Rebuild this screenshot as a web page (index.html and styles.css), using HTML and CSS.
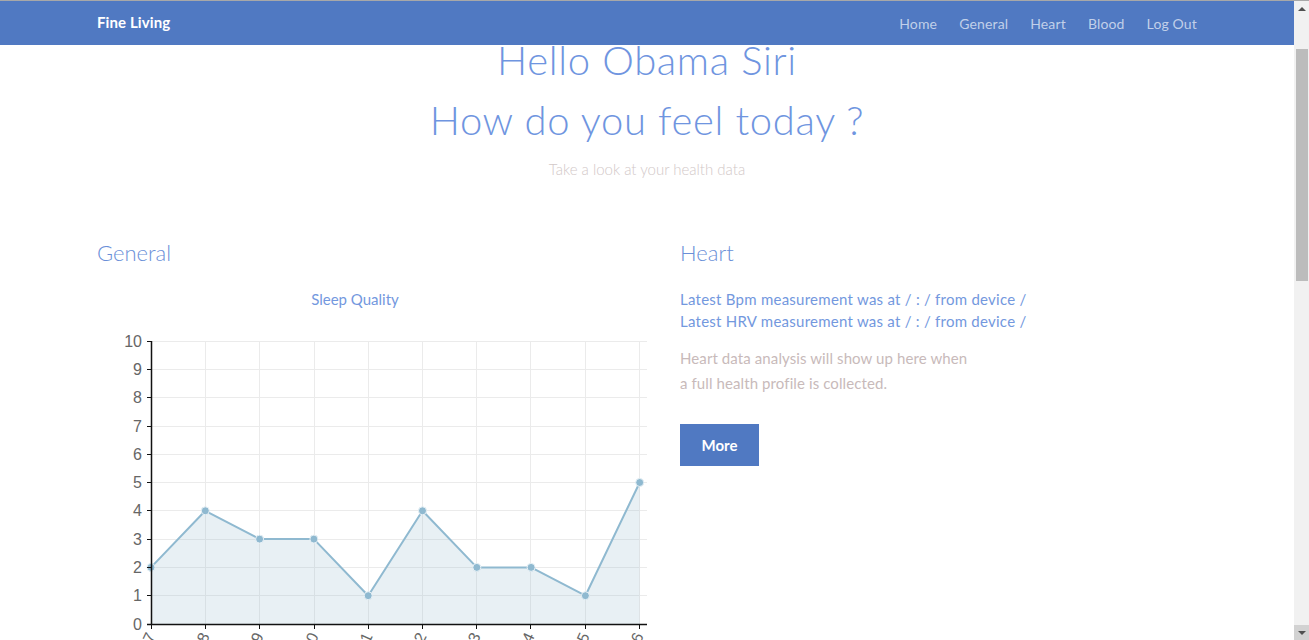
FILE: index.html
```html
<!DOCTYPE html>
<html lang="en">
<head>
<meta charset="utf-8">
<title>Fine Living</title>
<link rel="stylesheet" href="styles.css">
</head>
<body>
<nav class="navbar">
  <div class="container nav-inner">
    <a class="brand" href="#">Fine Living</a>
    <ul class="nav-links">
      <li><a href="#">Home</a></li>
      <li><a href="#">General</a></li>
      <li><a href="#">Heart</a></li>
      <li><a href="#">Blood</a></li>
      <li><a href="#">Log Out</a></li>
    </ul>
  </div>
</nav>

<div class="scrollbar" aria-hidden="true">
  <div class="sb-btn sb-up"><span class="tri-up"></span></div>
  <div class="sb-track"><div class="sb-thumb"></div></div>
  <div class="sb-btn sb-down"><span class="tri-down"></span></div>
</div>

<main class="page">
  <header class="hero">
    <h1 class="hero-title">Hello Obama Siri</h1>
    <h1 class="hero-title second">How do you feel today ?</h1>
    <p class="hero-sub">Take a look at your health data</p>
  </header>

  <section class="container sections">
    <div class="col col-general">
      <h2 class="section-title">General</h2>
      <div class="chart-title">Sleep Quality</div>
      <svg class="chart" width="560" height="330" viewBox="0 0 560 330" xmlns="http://www.w3.org/2000/svg">
        <g class="grid" stroke="#ebebeb" stroke-width="1">
          <line x1="54" y1="11.5" x2="550" y2="11.5"/>
          <line x1="54" y1="39.5" x2="550" y2="39.5"/>
          <line x1="54" y1="67.5" x2="550" y2="67.5"/>
          <line x1="54" y1="96.5" x2="550" y2="96.5"/>
          <line x1="54" y1="124.5" x2="550" y2="124.5"/>
          <line x1="54" y1="152.5" x2="550" y2="152.5"/>
          <line x1="54" y1="180.5" x2="550" y2="180.5"/>
          <line x1="54" y1="209.5" x2="550" y2="209.5"/>
          <line x1="54" y1="237.5" x2="550" y2="237.5"/>
          <line x1="54" y1="265.5" x2="550" y2="265.5"/>
          <line x1="108.5" y1="11" x2="108.5" y2="294"/>
          <line x1="162.5" y1="11" x2="162.5" y2="294"/>
          <line x1="217.5" y1="11" x2="217.5" y2="294"/>
          <line x1="271.5" y1="11" x2="271.5" y2="294"/>
          <line x1="325.5" y1="11" x2="325.5" y2="294"/>
          <line x1="379.5" y1="11" x2="379.5" y2="294"/>
          <line x1="433.5" y1="11" x2="433.5" y2="294"/>
          <line x1="488.5" y1="11" x2="488.5" y2="294"/>
          <line x1="542.5" y1="11" x2="542.5" y2="294"/>
        </g>
        <polygon fill="rgba(151,187,205,0.22)" points="54,237.4 108.3,180.8 162.6,209.1 216.9,209.1 271.2,265.7 325.5,180.8 379.8,237.4 434.1,237.4 488.4,265.7 542.7,152.5 542.7,294 54,294"/>
        <polyline fill="none" stroke="#8fb9d0" stroke-width="2" stroke-linejoin="round" points="54,237.4 108.3,180.8 162.6,209.1 216.9,209.1 271.2,265.7 325.5,180.8 379.8,237.4 434.1,237.4 488.4,265.7 542.7,152.5"/>
        <g fill="#8fb9d0" stroke="#e8f1f6" stroke-width="1">
          <circle cx="54" cy="237.4" r="4"/>
          <circle cx="108.3" cy="180.8" r="4"/>
          <circle cx="162.6" cy="209.1" r="4"/>
          <circle cx="216.9" cy="209.1" r="4"/>
          <circle cx="271.2" cy="265.7" r="4"/>
          <circle cx="325.5" cy="180.8" r="4"/>
          <circle cx="379.8" cy="237.4" r="4"/>
          <circle cx="434.1" cy="237.4" r="4"/>
          <circle cx="488.4" cy="265.7" r="4"/>
          <circle cx="542.7" cy="152.5" r="4"/>
        </g>
        <g class="axes" stroke="#111" stroke-width="1.5">
          <line x1="54.5" y1="11" x2="54.5" y2="294.5"/>
          <line x1="50" y1="294.5" x2="550" y2="294.5"/>
        </g>
        <g class="ticks" stroke="#111" stroke-width="1">
          <line x1="50" y1="11.5" x2="54" y2="11.5"/>
          <line x1="50" y1="39.5" x2="54" y2="39.5"/>
          <line x1="50" y1="67.5" x2="54" y2="67.5"/>
          <line x1="50" y1="96.5" x2="54" y2="96.5"/>
          <line x1="50" y1="124.5" x2="54" y2="124.5"/>
          <line x1="50" y1="152.5" x2="54" y2="152.5"/>
          <line x1="50" y1="180.5" x2="54" y2="180.5"/>
          <line x1="50" y1="209.5" x2="54" y2="209.5"/>
          <line x1="50" y1="237.5" x2="54" y2="237.5"/>
          <line x1="50" y1="265.5" x2="54" y2="265.5"/>
          <line x1="54.5" y1="294" x2="54.5" y2="299"/>
          <line x1="108.5" y1="294" x2="108.5" y2="299"/>
          <line x1="162.5" y1="294" x2="162.5" y2="299"/>
          <line x1="217.5" y1="294" x2="217.5" y2="299"/>
          <line x1="271.5" y1="294" x2="271.5" y2="299"/>
          <line x1="325.5" y1="294" x2="325.5" y2="299"/>
          <line x1="379.5" y1="294" x2="379.5" y2="299"/>
          <line x1="433.5" y1="294" x2="433.5" y2="299"/>
          <line x1="488.5" y1="294" x2="488.5" y2="299"/>
          <line x1="542.5" y1="294" x2="542.5" y2="299"/>
        </g>
        <g class="ylabels" font-family="'Liberation Sans', Arial, sans-serif" font-size="16" fill="#666" text-anchor="end">
          <text x="45" y="17">10</text>
          <text x="45" y="45">9</text>
          <text x="45" y="73">8</text>
          <text x="45" y="102">7</text>
          <text x="45" y="130">6</text>
          <text x="45" y="158">5</text>
          <text x="45" y="186">4</text>
          <text x="45" y="215">3</text>
          <text x="45" y="243">2</text>
          <text x="45" y="271">1</text>
          <text x="45" y="300">0</text>
        </g>
        <g class="xlabels" font-family="'Liberation Sans', Arial, sans-serif" font-size="16" fill="#666" text-anchor="end">
          <text transform="translate(59,306) rotate(-65)">2017-04-17</text>
          <text transform="translate(113,306) rotate(-65)">2017-04-18</text>
          <text transform="translate(167,306) rotate(-65)">2017-04-19</text>
          <text transform="translate(222,306) rotate(-65)">2017-04-20</text>
          <text transform="translate(276,306) rotate(-65)">2017-04-21</text>
          <text transform="translate(330,306) rotate(-65)">2017-04-22</text>
          <text transform="translate(384,306) rotate(-65)">2017-04-23</text>
          <text transform="translate(438,306) rotate(-65)">2017-04-24</text>
          <text transform="translate(493,306) rotate(-65)">2017-04-25</text>
          <text transform="translate(547,306) rotate(-65)">2017-04-26</text>
        </g>
      </svg>
    </div>

    <div class="col col-heart">
      <h2 class="section-title">Heart</h2>
      <p class="measure">Latest Bpm measurement was at / : / from device /<br>Latest HRV measurement was at / : / from device /</p>
      <p class="analysis">Heart data analysis will show up here when<br>a full health profile is collected.</p>
      <a class="btn" href="#">More</a>
    </div>
  </section>

  <section class="container sections lower">
    <div class="col">
      <h2 class="section-title">Blood</h2>
      <p class="analysis">Blood data analysis will show up here when<br>a full health profile is collected.</p>
    </div>
  </section>
</main>
</body>
</html>
```

FILE: styles.css
```css
* { box-sizing: border-box; }

html, body {
  margin: 0;
  padding: 0;
}

body {
  font-family: Lato, "Open Sans", sans-serif;
  background: #fff;
  color: #c2b5b5;
  margin-right: 15px;
}

a { text-decoration: none; }

.container {
  width: 1100px;
  margin: 0 auto;
}

.navbar {
  position: fixed;
  top: 0;
  left: 0;
  right: 15px;
  height: 45px;
  background: #5079c2;
  border-top: 1px solid #a8a8a8;
  z-index: 10;
}

.nav-inner {
  display: flex;
  align-items: center;
  justify-content: space-between;
  height: 44px;
  padding-bottom: 2px;
}

.brand {
  color: #fff;
  font-weight: 700;
  font-size: 15px;
  letter-spacing: 0.1px;
}

.nav-links {
  display: flex;
  gap: 22px;
  list-style: none;
  margin: 0;
  padding: 0;
}

.nav-links a {
  color: rgba(255, 255, 255, 0.66);
  font-size: 14px;
  font-weight: 400;
  letter-spacing: 0.15px;
}

/* fake browser scrollbar */
.scrollbar {
  position: fixed;
  top: 0;
  right: 0;
  bottom: 0;
  width: 15px;
  background: #f1f1f1;
  border-top: 1px solid #a8a8a8;
  display: flex;
  flex-direction: column;
  z-index: 11;
}

.sb-btn {
  height: 15px;
  display: flex;
  align-items: center;
  justify-content: center;
  flex: none;
}

.sb-down {
  background: #d2d2d2;
}

.tri-up {
  width: 0;
  height: 0;
  border-left: 4px solid transparent;
  border-right: 4px solid transparent;
  border-bottom: 4px solid #505050;
}

.tri-down {
  width: 0;
  height: 0;
  border-left: 4px solid transparent;
  border-right: 4px solid transparent;
  border-top: 4px solid #505050;
}

.sb-track {
  flex: 1;
  padding: 33px 1px 0 2px;
}

.sb-thumb {
  height: 232px;
  background: #bcbcbc;
}

.page {
  padding-top: 45px;
  min-height: 1683px;
}

.hero {
  text-align: center;
  margin-top: -4px;
}

.hero-title {
  margin: 0;
  font-size: 40px;
  line-height: 38px;
  font-weight: 300;
  color: #6f95e0;
  letter-spacing: 0.65px;
}

.hero-title.second {
  margin-top: 22px;
}

.hero-sub {
  margin: 20px 0 0;
  font-size: 15px;
  line-height: 20px;
  font-weight: 300;
  color: #d2c8c8;
}

.sections {
  display: grid;
  grid-template-columns: 583px 1fr;
  margin-top: 59px;
}

.section-title {
  margin: 0;
  font-size: 22px;
  line-height: 30px;
  font-weight: 300;
  color: #6a8fd8;
}

.chart-title {
  width: 516px;
  text-align: center;
  margin-top: 21px;
  font-size: 15px;
  line-height: 20px;
  color: #7398de;
  font-weight: 400;
}

.chart {
  display: block;
  margin-top: 21px;
  overflow: hidden;
}

.measure {
  margin: 20px 0 0;
  font-size: 15px;
  line-height: 22px;
  color: #7398de;
  letter-spacing: 0.25px;
}

.analysis {
  margin: 14px 0 0;
  font-size: 15px;
  line-height: 25px;
  color: #c8baba;
  font-weight: 400;
  letter-spacing: 0.1px;
}

.btn {
  display: inline-block;
  margin-top: 28px;
  width: 79px;
  height: 42px;
  line-height: 42px;
  text-align: center;
  background: #5079c2;
  color: #fff;
  font-weight: 700;
  font-size: 15px;
}

.lower {
  margin-top: 120px;
}
```
